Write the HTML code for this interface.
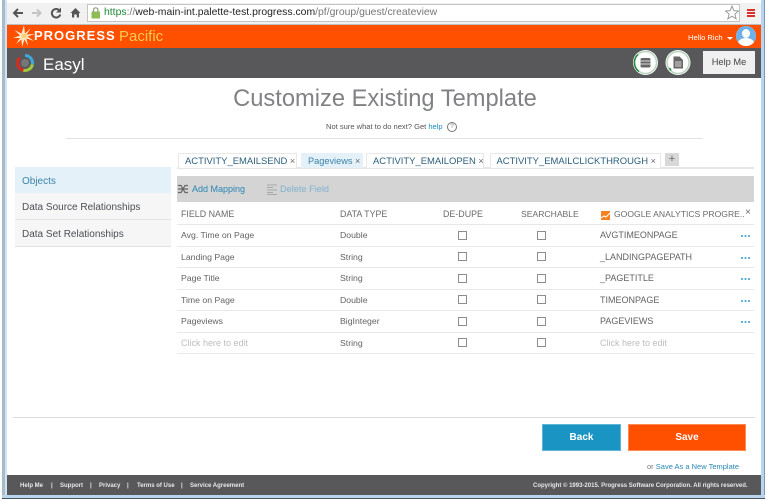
<!DOCTYPE html>
<html><head><meta charset="utf-8"><style>
html,body{margin:0;padding:0}
body{width:768px;height:501px;position:relative;overflow:hidden;background:#fff;font-family:"Liberation Sans",sans-serif;color:#626366}
.a{position:absolute;white-space:nowrap}
.t{font-size:8.7px;line-height:12px}
.u{font-size:9px;line-height:12px}
.h{color:#6a6a6a;font-size:8.9px;line-height:12px}
.line{position:absolute;left:177px;width:577px;height:1px;background:#e8e8e8}
.cb{position:absolute;width:7px;height:7px;border:1px solid #8d8d8d;background:#fff}
.dots{position:absolute;left:741px;width:2px;height:2px;border-radius:50%;background:#3a9cc9;box-shadow:3.500px 0 0 #3a9cc9,7px 0 0 #3a9cc9}
.tab{position:absolute;top:153px;height:14px;background:#fff;border:1px solid #e8e8e8;border-bottom:0;font-size:9.450px;line-height:15px;color:#2c5f7c;white-space:nowrap;padding-left:6px;box-sizing:content-box}
.tab i{font-style:normal;color:#666;font-size:9px}
.side{position:absolute;left:15px;width:156px;height:26px;background:#f6f6f6;border-bottom:1px solid #e3e3e3;font-size:10px;line-height:30px;text-indent:7px;color:#4a4f55}
.foot{position:absolute;top:482px;font-size:6px;font-weight:bold;line-height:8px;color:#e8e8e8;white-space:nowrap}
</style></head><body>
<!-- window frame -->
<div class="a" style="left:2px;top:0;width:5px;height:499px;background:linear-gradient(90deg,#a7bbce,#a7bbce 60%,#d5e3f0 60%,#d5e3f0)"></div>
<div class="a" style="left:761px;top:0;width:3px;height:499px;background:#b8d4ee"></div>
<div class="a" style="left:764px;top:0;width:1px;height:499px;background:#7f97b0"></div>
<div class="a" style="left:2px;top:495px;width:763px;height:3px;background:#b9d4ec"></div>
<div class="a" style="left:2px;top:498px;width:763px;height:1px;background:#4a5560"></div>
<!-- browser bar -->
<div class="a" style="left:7px;top:3px;width:754px;height:22px;background:#f1f1f1"></div>
<div class="a" style="left:7px;top:24px;width:754px;height:1px;background:#bdbdbd"></div>
<div class="a" style="left:87px;top:4px;width:653px;height:18px;background:#fff;border:1px solid #c4c4c4;box-sizing:border-box"></div>
<svg class="a" style="left:7px;top:0" width="85" height="25" viewBox="7 0 85 25">
<path d="M23 13H14M18 9l-4 4 4 4" fill="none" stroke="#555" stroke-width="2"/>
<path d="M32 13h8M37 9.500l3.500 3.500-3.500 3.500" fill="none" stroke="#c4c4c4" stroke-width="2"/>
<path d="M59.500 10.500a4.300 4.300 0 1 0 .8 4" fill="none" stroke="#555" stroke-width="2"/><path d="M61 7.500v5h-5z" fill="#555"/>
<path d="M70.500 13l5-5 5 5h-1.500v4.500h-2.200v-3h-2.600v3h-2.200V13z" fill="#555"/>
</svg>
<svg class="a" style="left:91px;top:7px" width="10" height="12" viewBox="0 0 10 12"><rect x=".5" y="4.500" width="8.500" height="7" fill="#8fbb55"/><path d="M2.500 5V3a2.200 2.200 0 0 1 4.400 0v2" fill="none" stroke="#8a9a7a" stroke-width="1.200"/></svg>
<div class="a" style="left:104px;top:6px;font-size:10.420px;line-height:14px;color:#777"><span style="color:#1d8a36">https</span>://<span style="color:#222">web-main-int.palette-test.progress.com</span>/pf/group/guest/createview</div>
<svg class="a" style="left:725px;top:5px" width="14" height="15" viewBox="0 0 14 15"><path d="M7 1l1.800 4.600 4.700.4-3.600 3 1.200 4.800L7 11.200 2.900 13.800 4.100 9 .5 6l4.700-.4z" fill="#fff" stroke="#9a9a9a"/></svg>
<div class="a" style="left:747px;top:9px;width:8px;height:2px;background:#d9322a;box-shadow:0 3px 0 #d9322a,0 6px 0 #d9322a"></div>
<!-- orange -->
<div class="a" style="left:7px;top:25px;width:754px;height:23px;background:#ff5000"></div>
<svg class="a" style="left:13px;top:25px" width="22" height="22" viewBox="0 0 22 22"><path d="M11 0l1 8.500L18 3l-4.500 6.500 8.500-.5-7.500 2.500 6.500 4.500-7.500-2.500L15 21l-3.500-6.500L9 22l-.5-7.500L3 19l4-6-7 0 7-2.500L1.500 5l7 3.500z" fill="#ffe8c8"/><circle cx="11" cy="11" r="2.500" fill="#ffd070"/></svg>
<div class="a" style="left:34px;top:27px;font-size:13px;line-height:18px;font-weight:bold;color:#fff;letter-spacing:1px">PROGRESS</div>
<div class="a" style="left:119px;top:28px;font-size:15px;line-height:18px;color:#ffc94f">Pacific</div>
<div class="a" style="left:688px;top:33px;font-size:7.600px;line-height:10px;color:#fff">Hello Rich</div>
<div class="a" style="left:727px;top:37px;width:0;height:0;border:3px solid transparent;border-top-color:#fff"></div>
<div class="a" style="left:736px;top:26px;width:20px;height:20px;border-radius:50%;background:#fff;overflow:hidden">
<div class="a" style="left:0;top:0;width:20px;height:20px;background:#6fb0e6"></div>
<div class="a" style="left:6px;top:3px;width:8px;height:9px;border-radius:50%;background:#fff"></div>
<div class="a" style="left:2px;top:12px;width:16px;height:10px;border-radius:50%;background:#fff"></div></div>
<!-- dark -->
<div class="a" style="left:7px;top:48px;width:754px;height:30px;background:#58585b"></div>
<svg class="a" style="left:15px;top:53px" width="20" height="20" viewBox="0 0 20 20">
<circle cx="10" cy="10" r="7.500" fill="none" stroke="#d72b20" stroke-width="3" stroke-dasharray="17 30" transform="rotate(95 10 10)"/>
<circle cx="10" cy="10" r="7.500" fill="none" stroke="#a3c83c" stroke-width="3" stroke-dasharray="12 35" transform="rotate(10 10 10)"/>
<circle cx="10" cy="10" r="7.500" fill="none" stroke="#3ea8dc" stroke-width="3" stroke-dasharray="13 34" transform="rotate(-90 10 10)"/>
<circle cx="10" cy="10" r="4" fill="#777"/></svg>
<div class="a" style="left:43px;top:54px;font-size:17px;line-height:22px;color:#fff">Easyl</div>
<svg class="a" style="left:632px;top:49px" width="60" height="27" viewBox="0 0 60 27">
<circle cx="13.500" cy="13.500" r="12.500" fill="#fff"/><circle cx="13.500" cy="13.500" r="11" fill="none" stroke="#b9d3bd" stroke-width="1.500"/>
<path d="M7 22.500A11 11 0 0 1 6 5.500" fill="none" stroke="#1a8a3c" stroke-width="1.500"/>
<rect x="8.500" y="9" width="10" height="9.500" rx="1.500" fill="#666"/><path d="M8.500 12h10M8.500 15h10" stroke="#fff" stroke-width=".8"/>
<circle cx="46" cy="13.500" r="12.500" fill="#fff"/><circle cx="46" cy="13.500" r="11" fill="none" stroke="#b9d3bd" stroke-width="1.500"/>
<path d="M39 21.500L37.500 19" fill="none" stroke="#1a8a3c" stroke-width="1.500"/>
<path d="M41.500 7.500h6l3.500 3.500v8.500h-9.500z" fill="#666"/><path d="M43 13h6.500M43 15h6.500M43 17h6.500" stroke="#fff" stroke-width=".8"/>
</svg>
<div class="a" style="left:703px;top:51px;width:52px;height:23px;background:#f0f0f0;font-size:9.300px;line-height:23px;text-align:center;color:#444">Help Me</div>
<!-- heading -->
<div class="a" style="left:8px;top:84px;width:754px;text-align:center;font-size:23.700px;line-height:30px;color:#808285">Customize Existing Template</div>
<div class="a" style="left:66px;top:138px;width:637px;height:1px;background:#e2e2e2"></div>
<div class="a" style="left:326px;top:122px;font-size:7.550px;line-height:10px;color:#555">Not sure what to do next? Get <span style="color:#1a8fc0">help</span></div>
<div class="a" style="left:447px;top:122px;width:8px;height:8px;border:1px solid #777;border-radius:50%;font-size:6.500px;line-height:8px;text-align:center;color:#777">?</div>
<!-- side -->
<div class="side" style="top:167px;background:#e4f1f8;color:#3b83a8">Objects</div>
<div class="side" style="top:193px">Data Source Relationships</div>
<div class="side" style="top:220px">Data Set Relationships</div>
<!-- tabs -->
<div class="a" style="left:177px;top:167px;width:577px;height:2px;background:#e6e6e6"></div>
<div class="tab" style="left:178px;width:111px">ACTIVITY_EMAILSEND <i>×</i></div>
<div class="tab" style="left:301px;width:54px;background:#e4f1f8;color:#3b83a8;border-color:#e4f1f8;font-size:9.200px">Pageviews <i>×</i></div>
<div class="tab" style="left:366px;width:110px">ACTIVITY_EMAILOPEN <i>×</i></div>
<div class="tab" style="left:489.500px;width:163px">ACTIVITY_EMAILCLICKTHROUGH <i>×</i></div>
<div class="a" style="left:665px;top:153px;width:14px;height:13px;background:#d8d8d8;font-size:11px;line-height:13px;text-align:center;color:#666">+</div>
<!-- toolbar -->
<div class="a" style="left:177px;top:176px;width:577px;height:26px;background:#d4d4d4"></div>
<svg class="a" style="left:178px;top:184px" width="11" height="11" viewBox="0 0 11 11"><path d="M0 1.500h3l4 7h3M0 8.500h3l4-7h3M0 5h10" fill="none" stroke="#666" stroke-width="1.200"/></svg>
<div class="a" style="left:192px;top:183px;font-size:9px;line-height:13px;color:#2a86b4">Add Mapping</div>
<svg class="a" style="left:267px;top:184px" width="11" height="11" viewBox="0 0 11 11"><path d="M0 1h10M0 3.500h6M0 6h10M0 8.500h6M0 10.500h10" stroke="#a8a8a8" stroke-width="1"/></svg>
<div class="a" style="left:280px;top:183px;font-size:9.200px;line-height:13px;color:#7fb3cf">Delete Field</div>
<!-- head -->
<div class="a h" style="left:181px;top:208px">FIELD NAME</div>
<div class="a h" style="left:340px;top:208px">DATA TYPE</div>
<div class="a h" style="left:443px;top:208px">DE-DUPE</div>
<div class="a h" style="left:521px;top:208px;font-size:8.600px">SEARCHABLE</div>
<svg class="a" style="left:601px;top:211px" width="9" height="9" viewBox="0 0 9 9"><rect width="9" height="9" fill="#f58220"/><path d="M0 7l3-2 2 1 4-4" fill="none" stroke="#fff" stroke-width="1"/></svg>
<div class="a h" style="left:614px;top:208px;font-size:8.600px">GOOGLE ANALYTICS PROGRE..</div>
<div class="a h" style="left:745px;top:207px;font-size:10px">×</div>
<div class="line" style="top:224px"></div><div class="line" style="top:246px"></div><div class="line" style="top:267px"></div><div class="line" style="top:289px"></div><div class="line" style="top:310px"></div><div class="line" style="top:332px"></div><div class="line" style="top:353px"></div>
<!-- rows -->
<div class="a t" style="left:181px;top:229px">Avg. Time on Page</div><div class="a t" style="left:340px;top:229px">Double</div><div class="cb" style="left:458px;top:231px"></div><div class="cb" style="left:537px;top:231px"></div><div class="a u" style="left:600px;top:229px">AVGTIMEONPAGE</div><div class="dots" style="top:235px"></div>
<div class="a t" style="left:181px;top:251px">Landing Page</div><div class="a t" style="left:340px;top:251px">String</div><div class="cb" style="left:458px;top:252px"></div><div class="cb" style="left:537px;top:252px"></div><div class="a u" style="left:600px;top:251px">_LANDINGPAGEPATH</div><div class="dots" style="top:257px"></div>
<div class="a t" style="left:181px;top:272px">Page Title</div><div class="a t" style="left:340px;top:272px">String</div><div class="cb" style="left:458px;top:274px"></div><div class="cb" style="left:537px;top:274px"></div><div class="a u" style="left:600px;top:272px">_PAGETITLE</div><div class="dots" style="top:278px"></div>
<div class="a t" style="left:181px;top:294px">Time on Page</div><div class="a t" style="left:340px;top:294px">Double</div><div class="cb" style="left:458px;top:295px"></div><div class="cb" style="left:537px;top:295px"></div><div class="a u" style="left:600px;top:294px">TIMEONPAGE</div><div class="dots" style="top:300px"></div>
<div class="a t" style="left:181px;top:315px">Pageviews</div><div class="a t" style="left:340px;top:315px">BigInteger</div><div class="cb" style="left:458px;top:317px"></div><div class="cb" style="left:537px;top:317px"></div><div class="a u" style="left:600px;top:315px">PAGEVIEWS</div><div class="dots" style="top:321px"></div>
<div class="a u" style="left:181px;top:337px;color:#bdbdbd">Click here to edit</div><div class="a t" style="left:340px;top:337px">String</div><div class="cb" style="left:458px;top:338px"></div><div class="cb" style="left:537px;top:338px"></div><div class="a u" style="left:600px;top:337px;color:#bdbdbd">Click here to edit</div>
<!-- bottom -->
<div class="a" style="left:13px;top:417px;width:742px;height:1px;background:#dcdcdc"></div>
<div class="a" style="left:542px;top:424px;width:77px;height:25px;border:1px solid #62b4d6;background:#1a94c2;font-size:10px;font-weight:bold;line-height:25px;text-align:center;color:#fff">Back</div>
<div class="a" style="left:628px;top:424px;width:116px;height:25px;border:1px solid #ff8a55;background:#ff5000;font-size:10px;font-weight:bold;line-height:25px;text-align:center;color:#fff">Save</div>
<div class="a" style="left:647px;top:462px;font-size:7.500px;line-height:10px;color:#777">or <span style="color:#2a86b4">Save As a New Template</span></div>
<!-- footer -->
<div class="a" style="left:7px;top:475px;width:754px;height:20px;background:#58585b"></div>
<div class="foot" style="left:20px">Help Me</div><div class="foot" style="left:51px">|</div>
<div class="foot" style="left:60px">Support</div><div class="foot" style="left:90px">|</div>
<div class="foot" style="left:99px">Privacy</div><div class="foot" style="left:127px">|</div>
<div class="foot" style="left:137px">Terms of Use</div><div class="foot" style="left:181px">|</div>
<div class="foot" style="left:190px">Service Agreement</div>
<div class="foot" style="left:533px">Copyright © 1993-2015. Progress Software Corporation. All rights reserved.</div>
</body></html>
